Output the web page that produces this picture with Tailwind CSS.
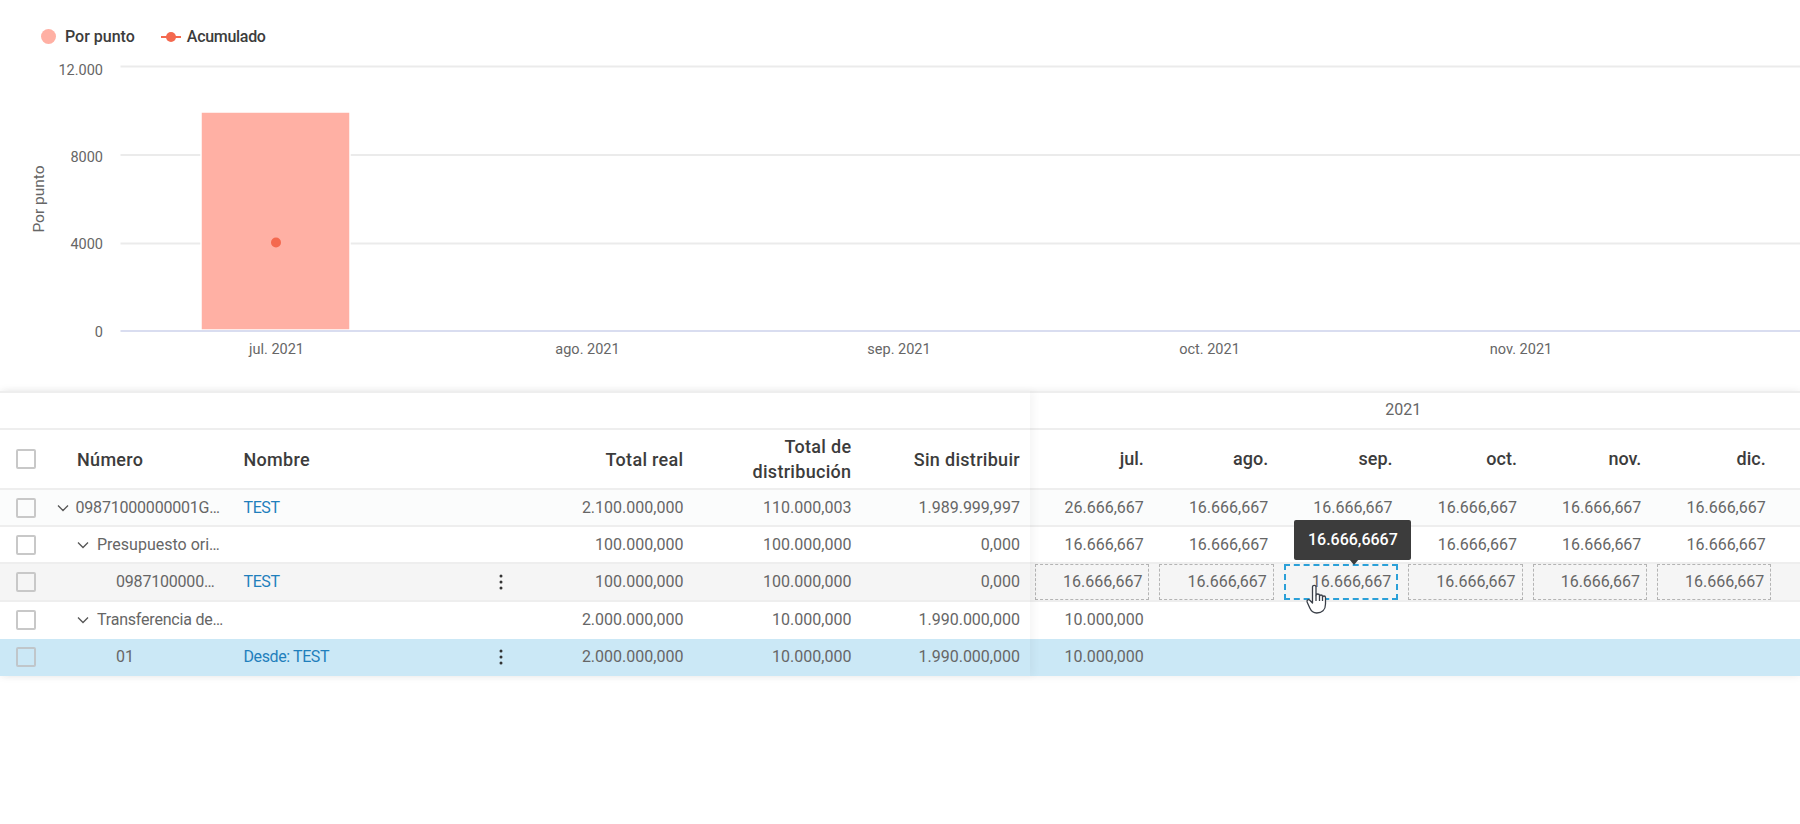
<!DOCTYPE html>
<html lang="es">
<head>
<meta charset="utf-8">
<title>Por punto</title>
<script src="https://cdn.jsdelivr.net/npm/@tailwindcss/browser@4"></script>
</head>
<body class="bg-white w-[1800px] h-[824px] overflow-hidden font-['Roboto',sans-serif] text-[16px] text-[#666666]">

<!-- Chart -->
<section class="h-[391px]">
	<div class="h-[48px] pt-[25px] pl-[41px] flex items-center text-[16px] font-medium text-[#3c3c3c]">
		<span class="w-[15px] h-[15px] rounded-full bg-[#ffb0a4]"></span>
		<span class="ml-[9px]">Por punto</span>
		<svg class="ml-[26px]" width="20" height="12" viewBox="0 0 20 12"><path d="M0 6h20" stroke="#f4694f" stroke-width="2"/><circle cx="10" cy="6" r="5" fill="#f4694f"/></svg>
		<span class="ml-[6px] tracking-[-0.3px]">Acumulado</span>
	</div>
	<svg width="1800" height="343" viewBox="0 48 1800 343" class="block" font-size="14.500" fill="#666666">
		<g stroke="#ebebeb" stroke-width="2">
			<path d="M120.500 66.500h1680M120.500 155h1680M120.500 243.500h1680"/>
		</g>
		<rect x="201" y="112" width="149" height="218" fill="#ffb0a4" stroke="#ffffff" stroke-width="1.500"/>
		<path d="M120.500 331h1680" stroke="#d9ddf0" stroke-width="2"/>
		<circle cx="276" cy="242.500" r="5" fill="#f4694f"/>
		<g text-anchor="end">
			<text x="103" y="74.500">12.000</text>
			<text x="103" y="162">8000</text>
			<text x="103" y="249">4000</text>
			<text x="103" y="337">0</text>
		</g>
		<text transform="translate(44 199) rotate(-90)" text-anchor="middle" font-size="15.500">Por punto</text>
		<g text-anchor="middle">
			<text x="276.500" y="354">jul. 2021</text>
			<text x="587.500" y="354">ago. 2021</text>
			<text x="899" y="354">sep. 2021</text>
			<text x="1209.500" y="354">oct. 2021</text>
			<text x="1521" y="354">nov. 2021</text>
		</g>
	</svg>
</section>

<!-- Table -->
<section class="flex w-full shadow-[0_0_8px_rgba(0,0,0,0.08)]">

	<!-- Frozen columns -->
	<div class="relative z-10 w-[1030px] shrink-0 shadow-[4px_0_8px_rgba(0,0,0,0.04)]">
		<div class="h-[39px] border-y-2 border-[#eeeeee] bg-white"></div>

		<div class="h-[60px] grid grid-cols-[56px_187.5px_241.5px_32px_166.4px_168px_168.6px] items-center border-b-2 border-[#eeeeee] bg-white text-[18px] tracking-[0.3px] font-medium text-[#3c3c3c]">
			<span class="ml-[16px] w-[20px] h-[20px] border-2 border-[#c8c8c8] rounded-[2px]"></span>
			<span class="pl-[21px]">Número</span>
			<span>Nombre</span>
			<span></span>
			<span class="text-right">Total real</span>
			<span class="text-right leading-[25px]">Total de<br>distribución</span>
			<span class="text-right">Sin distribuir</span>
		</div>

		<div class="h-[37.2px] grid grid-cols-[56px_187.5px_241.5px_32px_166.4px_168px_168.6px] items-center border-b-2 border-[#eeeeee] bg-[#fbfcfc]">
			<span class="ml-[16px] w-[20px] h-[20px] border-2 border-[#c8c8c8] rounded-[2px]"></span>
			<span class="flex items-center whitespace-nowrap tracking-[-0.2px]"><svg class="w-[12px] h-[8px] ml-[1px] mr-[6.500px]" viewBox="0 0 12 8" fill="none" stroke="#555555" stroke-width="1.300"><path d="M1 1.500l5 5 5-5"/></svg>09871000000001G…</span>
			<span class="text-[#1f7fbc] tracking-[-0.4px]">TEST</span>
			<span></span>
			<span class="text-right">2.100.000,000</span>
			<span class="text-right">110.000,003</span>
			<span class="text-right">1.989.999,997</span>
		</div>

		<div class="h-[37.2px] grid grid-cols-[56px_187.5px_241.5px_32px_166.4px_168px_168.6px] items-center border-b-2 border-[#eeeeee] bg-white">
			<span class="ml-[16px] w-[20px] h-[20px] border-2 border-[#c8c8c8] rounded-[2px]"></span>
			<span class="flex items-center whitespace-nowrap pl-[21px]"><svg class="w-[12px] h-[8px] mr-[8px]" viewBox="0 0 12 8" fill="none" stroke="#555555" stroke-width="1.300"><path d="M1 1.500l5 5 5-5"/></svg>Presupuesto ori…</span>
			<span></span>
			<span></span>
			<span class="text-right">100.000,000</span>
			<span class="text-right">100.000,000</span>
			<span class="text-right">0,000</span>
		</div>

		<div class="h-[37.2px] grid grid-cols-[56px_187.5px_241.5px_32px_166.4px_168px_168.6px] items-center border-b-2 border-[#eeeeee] bg-[#f5f5f5]">
			<span class="ml-[16px] w-[20px] h-[20px] border-2 border-[#c8c8c8] rounded-[2px]"></span>
			<span class="pl-[60px] whitespace-nowrap tracking-[-0.2px]">0987100000…</span>
			<span class="text-[#1f7fbc] tracking-[-0.4px]">TEST</span>
			<span class="flex justify-center"><svg width="4" height="18" viewBox="0 0 4 18" fill="#333333"><circle cx="2" cy="3" r="1.500"/><circle cx="2" cy="9" r="1.500"/><circle cx="2" cy="15" r="1.500"/></svg></span>
			<span class="text-right">100.000,000</span>
			<span class="text-right">100.000,000</span>
			<span class="text-right">0,000</span>
		</div>

		<div class="h-[37.2px] grid grid-cols-[56px_187.5px_241.5px_32px_166.4px_168px_168.6px] items-center bg-white">
			<span class="ml-[16px] w-[20px] h-[20px] border-2 border-[#c8c8c8] rounded-[2px]"></span>
			<span class="flex items-center whitespace-nowrap pl-[21px] tracking-[-0.2px]"><svg class="w-[12px] h-[8px] mr-[8px]" viewBox="0 0 12 8" fill="none" stroke="#555555" stroke-width="1.300"><path d="M1 1.500l5 5 5-5"/></svg>Transferencia de…</span>
			<span></span>
			<span></span>
			<span class="text-right">2.000.000,000</span>
			<span class="text-right">10.000,000</span>
			<span class="text-right">1.990.000,000</span>
		</div>

		<div class="h-[37.2px] grid grid-cols-[56px_187.5px_241.5px_32px_166.4px_168px_168.6px] items-center bg-[#cbe8f6]">
			<span class="ml-[16px] w-[20px] h-[20px] border-2 border-[#c0c6ca] rounded-[2px]"></span>
			<span class="pl-[60px]">01</span>
			<span class="text-[#1f7fbc] tracking-[-0.4px]">Desde: TEST</span>
			<span class="flex justify-center"><svg width="4" height="18" viewBox="0 0 4 18" fill="#333333"><circle cx="2" cy="3" r="1.500"/><circle cx="2" cy="9" r="1.500"/><circle cx="2" cy="15" r="1.500"/></svg></span>
			<span class="text-right">2.000.000,000</span>
			<span class="text-right">10.000,000</span>
			<span class="text-right">1.990.000,000</span>
		</div>
	</div>

	<!-- Months -->
	<div class="grow min-w-0">
		<div class="h-[39px] border-y-2 border-[#eeeeee]">
			<div class="w-[746.400px] h-full flex items-center justify-center pb-[2px]">2021</div>
		</div>

		<div class="h-[60px] grid grid-cols-[repeat(6,124.4px)] items-center text-right border-b-2 border-[#eeeeee] text-[18px] font-medium text-[#3c3c3c] pb-[2px]">
			<span class="pr-[10.600px]">jul.</span>
			<span class="pr-[10.600px]">ago.</span>
			<span class="pr-[10.600px]">sep.</span>
			<span class="pr-[10.600px]">oct.</span>
			<span class="pr-[10.600px]">nov.</span>
			<span class="pr-[10.600px]">dic.</span>
		</div>

		<div class="h-[37.2px] grid grid-cols-[repeat(6,124.4px)] items-center text-right border-b-2 border-[#eeeeee] bg-[#fbfcfc]">
			<span class="pr-[10.600px]">26.666,667</span>
			<span class="pr-[10.600px]">16.666,667</span>
			<span class="pr-[10.600px]">16.666,667</span>
			<span class="pr-[10.600px]">16.666,667</span>
			<span class="pr-[10.600px]">16.666,667</span>
			<span class="pr-[10.600px]">16.666,667</span>
		</div>

		<div class="h-[37.2px] grid grid-cols-[repeat(6,124.4px)] items-center text-right border-b-2 border-[#eeeeee]">
			<span class="pr-[10.600px]">16.666,667</span>
			<span class="pr-[10.600px]">16.666,667</span>
			<span class="pr-[10.600px]">16.666,667</span>
			<span class="pr-[10.600px]">16.666,667</span>
			<span class="pr-[10.600px]">16.666,667</span>
			<span class="pr-[10.600px]">16.666,667</span>
		</div>

		<div class="h-[37.2px] grid grid-cols-[repeat(6,124.4px)] items-stretch text-right border-b-2 border-[#eeeeee] bg-[#f5f5f5]">
			<span class="mx-[5px] flex items-center justify-end pr-[6px] border border-dashed border-[#b4b4b4]">16.666,667</span>
			<span class="mx-[5px] flex items-center justify-end pr-[6px] border border-dashed border-[#b4b4b4]">16.666,667</span>
			<span class="relative mx-[5px] flex items-center justify-end pr-[5px] border-2 border-dashed border-[#2ba0d8]">
				16.666,667
				<!-- Tooltip -->
				<span class="absolute left-[8.600px] top-[-46px] w-[117px] h-[40px] z-20 rounded-[2px] bg-[#3c3c3c] text-white font-medium flex items-center justify-center">16.666,6667</span>
				<span class="absolute left-[63px] top-[-7px] z-20 border-x-[5px] border-t-[6px] border-x-transparent border-t-[#3c3c3c]"></span>
				<!-- Cursor -->
				<svg class="absolute left-[19.600px] top-[18px] z-20" width="22" height="30" viewBox="0 0 20 30" fill="#ffffff" stroke="#3a3f48" stroke-width="1.300" stroke-linejoin="round"><path d="M6.500 19L3.800 16.200C2.400 14.900 .3 16.400 1.200 18.200L3.800 24C5.300 27.300 7.300 29 10.700 29C15.700 29 19.500 26 19.500 20V13.500C19.500 11.500 16.500 11.500 16.500 13.500V12.500C16.500 10.500 13.500 10.500 13.500 12.500V11.500C13.500 9.500 10 9.500 10 11.500V3C10 .8 6.500 .8 6.500 3Z"/><path d="M10 11.500V17M13.500 12.500V17M16.500 13.500V17" fill="none"/></svg>
			</span>
			<span class="mx-[5px] flex items-center justify-end pr-[6px] border border-dashed border-[#b4b4b4]">16.666,667</span>
			<span class="mx-[5px] flex items-center justify-end pr-[6px] border border-dashed border-[#b4b4b4]">16.666,667</span>
			<span class="mx-[5px] flex items-center justify-end pr-[6px] border border-dashed border-[#b4b4b4]">16.666,667</span>
		</div>

		<div class="h-[37.2px] grid grid-cols-[repeat(6,124.4px)] items-center text-right">
			<span class="pr-[10.600px]">10.000,000</span>
		</div>

		<div class="h-[37.2px] grid grid-cols-[repeat(6,124.4px)] items-center text-right bg-[#cbe8f6]">
			<span class="pr-[10.600px]">10.000,000</span>
		</div>
	</div>
</section>

</body>
</html>
